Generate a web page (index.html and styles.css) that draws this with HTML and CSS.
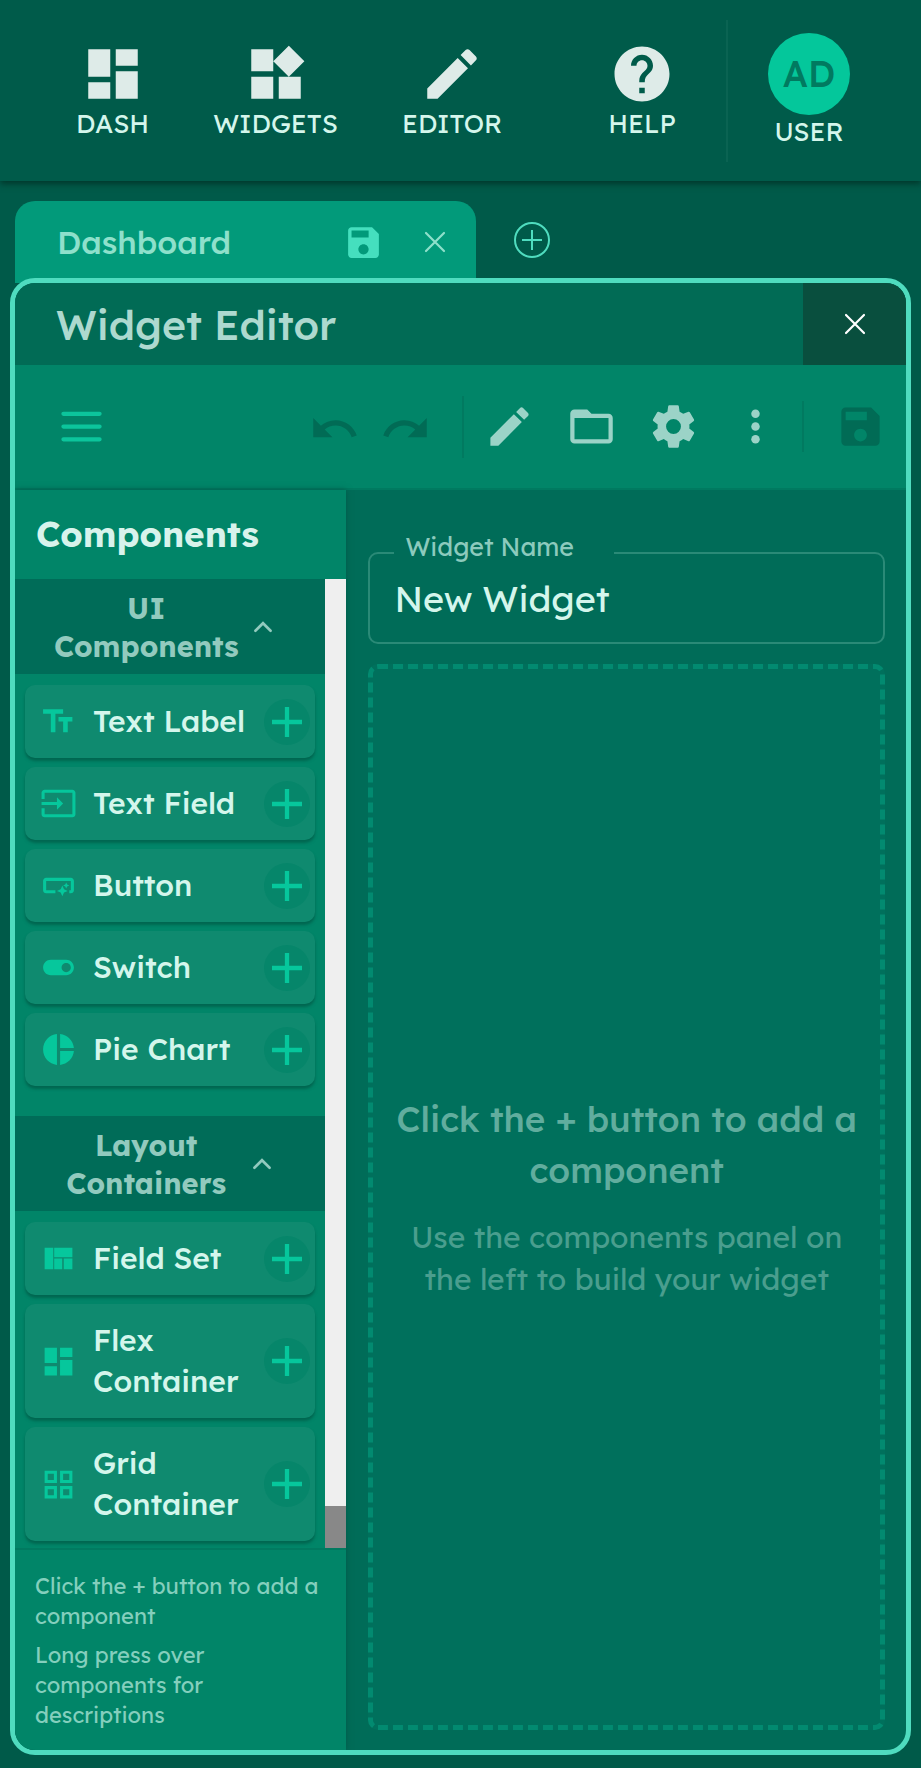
FILE: index.html
```
<!DOCTYPE html>
<html lang="en">
<head>
<meta charset="utf-8">
<meta name="viewport" content="width=device-width, initial-scale=1">
<title>Widget Editor</title>
<link rel="stylesheet" href="styles.css">
</head>
<body>
<svg class="sprite" aria-hidden="true">
  <symbol id="dashboard" viewBox="0 0 24 24"><path d="M3 13h8V3H3v10zm0 8h8v-6H3v6zm10 0h8V11h-8v10zm0-18v6h8V3h-8z"/></symbol>
  <symbol id="edit" viewBox="0 0 24 24"><path d="M3 17.25V21h3.75L17.81 9.94l-3.75-3.75L3 17.25zM20.71 7.04c.39-.39.39-1.02 0-1.41l-2.34-2.34c-.39-.39-1.02-.39-1.41 0l-1.83 1.83 3.75 3.75 1.83-1.83z"/></symbol>
  <symbol id="save" viewBox="0 0 24 24"><path d="M17 3H5c-1.11 0-2 .9-2 2v14c0 1.1.89 2 2 2h14c1.1 0 2-.9 2-2V7l-4-4zm-5 16c-1.66 0-3-1.34-3-3s1.34-3 3-3 3 1.34 3 3-1.34 3-3 3zm3-10H5V5h10v4z"/></symbol>
  <symbol id="close" viewBox="0 0 24 24"><path d="M3 3L21 21M21 3L3 21" fill="none" stroke="currentColor" stroke-width="2.2" stroke-linecap="round"/></symbol>
  <symbol id="plus" viewBox="5 5 14 14"><path d="M19 13h-6v6h-2v-6H5v-2h6V5h2v6h6z"/></symbol>
  <symbol id="chevron" viewBox="0 0 24 24"><path d="M5 15.5l7-7 7 7" fill="none" stroke="currentColor" stroke-width="2.4" stroke-linecap="round"/></symbol>
</svg>

<header class="appbar">
  <nav class="nav">
    <a class="nav-item" href="#"><svg class="icon-nav"><use href="#dashboard"/></svg><span>DASH</span></a>
    <a class="nav-item" href="#"><svg class="icon-nav" viewBox="0 0 24 24"><path d="M13 13v8h8v-8h-8zM3 21h8v-8H3v8zM3 3v8h8V3H3zm13.66-1.31L11 7.34 16.66 13l5.66-5.66-5.66-5.65z"/></svg><span>WIDGETS</span></a>
    <a class="nav-item" href="#"><svg class="icon-nav"><use href="#edit"/></svg><span>EDITOR</span></a>
  </nav>
  <a class="nav-item help" href="#"><svg class="icon-nav" viewBox="0 0 24 24"><path d="M12 2C6.48 2 2 6.48 2 12s4.48 10 10 10 10-4.48 10-10S17.52 2 12 2zm1 17h-2v-2h2v2zm2.07-7.75l-.9.92C13.45 12.9 13 13.5 13 15h-2v-.5c0-1.1.45-2.1 1.17-2.83l1.24-1.26c.37-.36.59-.86.59-1.41 0-1.1-.9-2-2-2s-2 .9-2 2H8c0-2.21 1.79-4 4-4s4 1.79 4 4c0 .88-.36 1.68-.93 2.25z"/></svg><span>HELP</span></a>
  <a class="nav-item user" href="#"><span class="avatar">AD</span><span>USER</span></a>
</header>

<div class="tabs">
  <div class="tab">
    <span class="tab-title">Dashboard</span>
    <button class="plain" aria-label="Save dashboard"><svg class="icon-tab-save"><use href="#save"/></svg></button>
    <button class="plain" aria-label="Close tab"><svg class="icon-close"><use href="#close"/></svg></button>
  </div>
  <button class="plain add-tab" aria-label="Add tab"><svg class="icon-add-tab" viewBox="0 0 36 36"><circle cx="18" cy="18" r="17"/><path d="M8 18h20M18 8v20"/></svg></button>
</div>

<main class="window">
  <div class="titlebar">
    <h1>Widget Editor</h1>
    <button class="close-window" aria-label="Close editor"><svg class="icon-close"><use href="#close"/></svg></button>
  </div>

  <div class="toolbar">
    <button class="plain menu" aria-label="Menu"><svg class="icon-tool" viewBox="0 0 24 24"><path d="M3.5 6h17M3.5 12h17M3.5 18h17" stroke="currentColor" stroke-width="2" stroke-linecap="round"/></svg></button>
    <div class="tool-group history">
      <button class="plain" aria-label="Undo" disabled><svg class="icon-tool" viewBox="0 -1 24 24"><path d="M12.5 8c-2.65 0-5.05.99-6.9 2.6L2 7v9h9l-3.62-3.62c1.39-1.16 3.16-1.88 5.12-1.88 3.54 0 6.55 2.31 7.6 5.5l2.37-.78C21.08 11.03 17.15 8 12.5 8z"/></svg></button>
      <button class="plain" aria-label="Redo" disabled><svg class="icon-tool" viewBox="0 -1 24 24"><path d="M18.4 10.6C16.55 8.99 14.15 8 11.5 8c-4.65 0-8.58 3.03-9.96 7.22L3.9 16c1.05-3.19 4.05-5.5 7.6-5.5 1.95 0 3.73.72 5.12 1.88L13 16h9V7l-3.6 3.6z"/></svg></button>
    </div>
    <div class="tool-group actions">
      <button class="plain" aria-label="Edit"><svg class="icon-tool"><use href="#edit"/></svg></button>
      <button class="plain" aria-label="Open"><svg class="icon-tool" viewBox="0 0 24 24"><path d="M20 18H4V8h16m0-2h-8l-2-2H4c-1.11 0-2 .89-2 2v12a2 2 0 0 0 2 2h16a2 2 0 0 0 2-2V8c0-1.11-.9-2-2-2z"/></svg></button>
      <button class="plain" aria-label="Settings"><svg class="icon-tool" viewBox="0 0 24 24"><path d="M12,15.5A3.5,3.5 0 0,1 8.5,12A3.5,3.5 0 0,1 12,8.5A3.5,3.5 0 0,1 15.5,12A3.5,3.5 0 0,1 12,15.5M19.43,12.97C19.47,12.65 19.5,12.33 19.5,12C19.5,11.67 19.47,11.34 19.43,11L21.54,9.37C21.73,9.22 21.78,8.95 21.66,8.73L19.66,5.27C19.54,5.05 19.27,4.96 19.05,5.05L16.56,6.05C16.04,5.66 15.5,5.32 14.87,5.07L14.5,2.42C14.46,2.18 14.25,2 14,2H10C9.75,2 9.54,2.18 9.5,2.42L9.13,5.07C8.5,5.32 7.96,5.66 7.44,6.05L4.95,5.05C4.73,4.96 4.46,5.05 4.34,5.27L2.34,8.73C2.21,8.95 2.27,9.22 2.46,9.37L4.57,11C4.53,11.34 4.5,11.67 4.5,12C4.5,12.33 4.53,12.65 4.57,12.97L2.46,14.63C2.27,14.78 2.21,15.05 2.34,15.27L4.34,18.73C4.46,18.95 4.73,19.03 4.95,18.95L7.44,17.94C7.96,18.34 8.5,18.68 9.13,18.93L9.5,21.58C9.54,21.82 9.75,22 10,22H14C14.25,22 14.46,21.82 14.5,21.58L14.87,18.93C15.5,18.67 16.04,18.34 16.56,17.94L19.05,18.95C19.27,19.03 19.54,18.95 19.66,18.73L21.66,15.27C21.78,15.05 21.73,14.78 21.54,14.63L19.43,12.97Z"/></svg></button>
      <button class="plain" aria-label="More"><svg class="icon-tool" viewBox="0 0 24 24"><circle cx="12" cy="6" r="2"/><circle cx="12" cy="12" r="2"/><circle cx="12" cy="18" r="2"/></svg></button>
    </div>
    <div class="tool-group save-group">
      <button class="plain" aria-label="Save" disabled><svg class="icon-tool"><use href="#save"/></svg></button>
    </div>
  </div>

  <div class="workspace">
    <aside class="sidebar">
      <h2>Components</h2>
      <div class="scroller">
        <div class="groups">
          <section>
            <button class="group-head"><span>UI<br>Components</span><svg class="icon-chevron"><use href="#chevron"/></svg></button>
            <ul class="cards">
              <li class="card"><svg class="icon-card" viewBox="0 0 24 24"><path d="M2 4v3h5v12h3V7h5V4H2zm19 5h-9v3h3v7h3v-7h3V9z"/></svg><span>Text Label</span><button class="add" aria-label="Add Text Label"><svg class="icon-plus"><use href="#plus"/></svg></button></li>
              <li class="card"><svg class="icon-card" viewBox="0 0 24 24"><path d="M21 3.01H3c-1.1 0-2 .9-2 2V9h2V4.99h18v14.03H3V15H1v4.01c0 1.1.9 1.98 2 1.98h18c1.1 0 2-.88 2-1.98v-14c0-1.11-.9-2-2-2zM11 16l4-4-4-4v3H1v2h10v3z"/></svg><span>Text Field</span><button class="add" aria-label="Add Text Field"><svg class="icon-plus"><use href="#plus"/></svg></button></li>
              <li class="card"><svg class="icon-card" viewBox="0 0 24 24"><path d="M22 9v6c0 1.1-.9 2-2 2h-1v-2h1V9H4v6h6v2H4c-1.1 0-2-.9-2-2V9c0-1.1.9-2 2-2h16c1.1 0 2 .9 2 2zm-7.5 10 1.09-2.41L18 15.5l-2.41-1.09L14.5 12l-1.09 2.41L11 15.5l2.41 1.09L14.5 19zm2.5-5 .62-1.38L19 12l-1.38-.62L17 10l-.62 1.38L15 12l1.38.62L17 14z"/></svg><span>Button</span><button class="add" aria-label="Add Button"><svg class="icon-plus"><use href="#plus"/></svg></button></li>
              <li class="card"><svg class="icon-card" viewBox="0 0 24 24"><path d="M17 7H7c-2.76 0-5 2.24-5 5s2.24 5 5 5h10c2.76 0 5-2.24 5-5s-2.24-5-5-5zm0 8c-1.66 0-3-1.34-3-3s1.34-3 3-3 3 1.34 3 3-1.34 3-3 3z"/></svg><span>Switch</span><button class="add" aria-label="Add Switch"><svg class="icon-plus"><use href="#plus"/></svg></button></li>
              <li class="card"><svg class="icon-card" viewBox="0 0 24 24"><path d="M11 2v20c-5.07-.5-9-4.79-9-10s3.93-9.5 9-10zm2.03 0v8.99H22c-.47-4.74-4.24-8.52-8.97-8.99zm0 11.01V22c4.74-.47 8.5-4.25 8.97-8.99h-8.97z"/></svg><span>Pie Chart</span><button class="add" aria-label="Add Pie Chart"><svg class="icon-plus"><use href="#plus"/></svg></button></li>
            </ul>
          </section>
          <section>
            <button class="group-head"><span>Layout<br>Containers</span><svg class="icon-chevron"><use href="#chevron"/></svg></button>
            <ul class="cards">
              <li class="card"><svg class="icon-card" viewBox="0 0 24 24"><path d="M3 5h5.600v14H3zM9.200 5H21v6.200H9.200zM9.200 12h5.200v7H9.200zM15.400 12H21v7h-5.600z"/></svg><span>Field Set</span><button class="add" aria-label="Add Field Set"><svg class="icon-plus"><use href="#plus"/></svg></button></li>
              <li class="card"><svg class="icon-card"><use href="#dashboard"/></svg><span>Flex Container</span><button class="add" aria-label="Add Flex Container"><svg class="icon-plus"><use href="#plus"/></svg></button></li>
              <li class="card"><svg class="icon-card" viewBox="0 0 24 24"><path d="M3 3v8h8V3H3zm6 6H5V5h4v4zm-6 4v8h8v-8H3zm6 6H5v-4h4v4zm4-16v8h8V3h-8zm6 6h-4V5h4v4zm-6 4v8h8v-8h-8zm6 6h-4v-4h4v4z"/></svg><span>Grid Container</span><button class="add" aria-label="Add Grid Container"><svg class="icon-plus"><use href="#plus"/></svg></button></li>
            </ul>
          </section>
        </div>
        <div class="scroll-track"><div class="scroll-thumb"></div></div>
      </div>
      <footer class="hints">
        <p>Click the + button to add a component</p>
        <p>Long press over components for descriptions</p>
      </footer>
    </aside>

    <section class="canvas">
      <fieldset class="field">
        <legend><label for="widget-name">Widget Name</label></legend>
        <input id="widget-name" type="text" value="New Widget">
      </fieldset>
      <div class="dropzone">
        <p class="drop-title">Click the + button to add a component</p>
        <p class="drop-text">Use the components panel on the left to build your widget</p>
      </div>
    </section>
  </div>
</main>
</body>
</html>
```
FILE: styles.css
```
* { box-sizing: border-box; }

body {
  margin: 0;
  min-height: 100vh;
  display: flex;
  flex-direction: column;
  background: #005a49;
  color: #d4f6ec;
  font-family: Lexend, Inter, "Open Sans", sans-serif;
}

h1, h2, p, ul { margin: 0; padding: 0; }
button, input { font: inherit; color: inherit; }
a { color: inherit; text-decoration: none; }
svg { display: block; flex: none; fill: currentColor; }
.sprite { position: absolute; width: 0; height: 0; }

.plain {
  display: flex;
  padding: 0;
  border: 0;
  background: none;
}

/* App bar */
.appbar {
  display: flex;
  align-items: center;
  height: 181px;
  padding: 0 31px 0 44px;
  background: #005b4a;
  box-shadow: 0 3px 6px #00382c;
}
.nav { display: flex; flex: 1; }
.nav-item {
  display: flex;
  flex-direction: column;
  align-items: center;
  padding: 0 32px;
  font-size: 26px;
  line-height: 34px;
}
.icon-nav { width: 66px; height: 66px; color: #deebe8; }
.nav-item .icon-nav { margin: 0 -8px; }
.help { margin-right: 18px; }
.user {
  justify-content: center;
  height: 142px;
  padding: 0 40px;
  border-left: 2px solid #0a6352;
}
.avatar {
  display: grid;
  place-items: center;
  width: 82px;
  height: 82px;
  border-radius: 50%;
  background: #04c79b;
  color: #017a60;
  font-size: 36px;
  font-weight: 500;
}

/* Tabs */
.tabs {
  display: flex;
  height: 97px;
  padding: 20px 15px 0;
}
.tab {
  display: flex;
  align-items: center;
  width: 461px;
  height: 82px;
  padding: 0 29px 0 42px;
  border-radius: 20px 20px 0 0;
  background: #029a7a;
  color: #8ee0cb;
}
.tab-title { flex: 1; font-size: 32px; font-weight: 500; }
.icon-tab-save { width: 41px; height: 41px; margin-right: 39px; color: #45dfbe; }
.icon-close { width: 24px; height: 24px; }
.add-tab { align-self: flex-start; padding: 21px 38px; color: #4fdcbf; }
.icon-add-tab { width: 36px; height: 36px; fill: none; stroke: currentColor; stroke-width: 2; }

/* Window */
.window {
  position: relative;
  display: flex;
  flex: 1;
  flex-direction: column;
  margin: 0 10px 13px;
  overflow: hidden;
  border: 5px solid #4fdcbf;
  border-radius: 25px;
  background: #006c58;
}
.titlebar {
  display: flex;
  height: 82px;
  background: #016b55;
}
.titlebar h1 {
  flex: 1;
  padding-left: 41px;
  color: #add9cf;
  font-size: 41px;
  font-weight: 500;
  line-height: 84px;
}
.close-window {
  display: grid;
  place-items: center;
  width: 103px;
  padding: 0;
  border: 0;
  background: #094f3e;
  color: #fff;
}

.toolbar {
  display: flex;
  align-items: center;
  height: 125px;
  padding: 0 20px 0 41px;
  border-bottom: 2px solid #007a60;
  background: #018568;
  color: #9bd3c7;
}
.icon-tool { width: 51px; height: 51px; }
.menu { margin-right: auto; color: #0cc59c; }
.tool-group { display: flex; align-items: center; }
.tool-group button:disabled { color: #016b55; }
.history { gap: 20px; margin-right: 31px; }
.actions { height: 62px; gap: 31px; padding: 0 21px 0 20px; border-left: 2px solid #017a60; }
.save-group { height: 51px; padding-left: 31px; border-left: 2px solid #017a60; }

.workspace { display: flex; flex: 1; }

/* Component panel */
.sidebar {
  display: flex;
  flex: none;
  flex-direction: column;
  width: 37.2%;
  background: #018568;
  box-shadow: 0 0 6px #005a49;
}
.sidebar h2 {
  padding-left: 21px;
  color: #d8f3ec;
  font-size: 35px;
  font-weight: 700;
  line-height: 89px;
}
.scroller {
  display: flex;
  flex: 1;
  border-bottom: 2px solid #017a60;
}
.groups { flex: 1; }
.group-head {
  display: flex;
  align-items: center;
  justify-content: center;
  gap: 11px;
  width: 100%;
  height: 95px;
  padding: 0 11px 0 0;
  border: 0;
  background: #006c58;
  color: #92cabe;
  font-size: 29px;
  font-weight: 700;
  line-height: 38px;
}
.group-head span { min-width: 183px; }
.icon-chevron { width: 26px; height: 26px; }
.cards {
  display: flex;
  flex-direction: column;
  gap: 9px;
  padding: 11px 10px 30px;
  list-style: none;
}
section:last-child .cards { padding-bottom: 7px; }
.card {
  display: flex;
  align-items: center;
  padding: 16px 5px 16px 15px;
  border-radius: 10px;
  background: #0f8a6f;
  box-shadow: 0 3px 3px #006650;
  font-size: 30px;
  font-weight: 500;
  line-height: 41px;
}
.card span { flex: 1; padding-left: 16px; }
.icon-card { width: 37px; height: 37px; color: #06c79c; }
.add {
  display: grid;
  flex: none;
  place-items: center;
  width: 46px;
  height: 46px;
  margin: -4px 0;
  padding: 0;
  border: 0;
  border-radius: 50%;
  background: #06866a;
  color: #06c79c;
}
.icon-plus { width: 30px; height: 30px; }
.scroll-track {
  display: flex;
  align-items: flex-end;
  width: 21px;
  background: #efefef;
}
.scroll-thumb { width: 100%; height: 42px; background: #888; }

.hints {
  display: flex;
  flex-direction: column;
  gap: 9px;
  padding: 21px 10px 20px 20px;
  color: #84cfbd;
  font-size: 22px;
  line-height: 30px;
}

/* Canvas */
.canvas {
  display: flex;
  flex: 1;
  flex-direction: column;
  gap: 20px;
  padding: 42px 21px 20px 22px;
}
.field {
  min-width: 0;
  margin: 0;
  padding: 0 24px 20px;
  border: 2px solid #2a8a77;
  border-radius: 10px;
}
.field legend {
  padding: 0 40px 12px 11px;
  color: #8ccabd;
  font-size: 25px;
  line-height: 30px;
}
.field input {
  width: 100%;
  height: 48px;
  padding: 0;
  border: 0;
  outline: 0;
  background: none;
  font-size: 36px;
}
.dropzone {
  display: flex;
  flex: 1;
  flex-direction: column;
  justify-content: center;
  gap: 20px;
  padding: 0 18px;
  border: 5px dashed #028a70;
  border-radius: 10px;
  background: #00705c;
  text-align: center;
}
.drop-title { color: #61ad9e; font-size: 35px; font-weight: 500; line-height: 51px; }
.drop-text { color: #4a9e8e; font-size: 30px; line-height: 42px; }
```
